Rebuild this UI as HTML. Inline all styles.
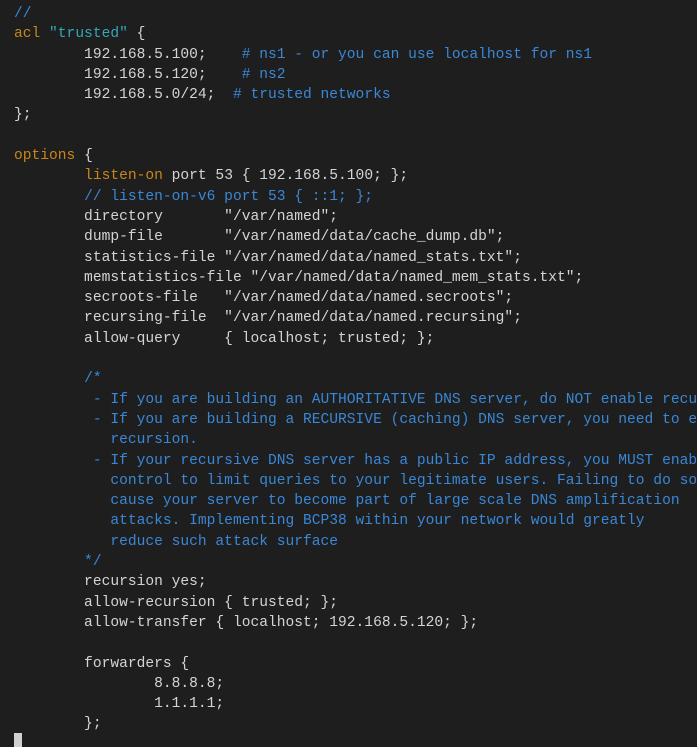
<!DOCTYPE html>
<html><head><style>
html,body{margin:0;padding:0;background:#1e1e1e;width:697px;height:747px;overflow:hidden}
pre{margin:0;padding:4px 0 0 14px;width:683px;height:743px;overflow:hidden;font-family:"Liberation Mono",monospace;font-size:14.6px;line-height:20.3px;color:#d4d4d4;white-space:pre}
.c{color:#3a87d6}.k{color:#c8861a}.s{color:#2fa8b8}
.cur{position:absolute;left:14px;top:733px;width:8px;height:14px;background:#d0d0d0}
</style></head><body><pre><span class="c">//</span>
<span class="k">acl</span> <span class="s">"trusted"</span> {
        192.168.5.100;    <span class="c"># ns1 - or you can use localhost for ns1</span>
        192.168.5.120;    <span class="c"># ns2</span>
        192.168.5.0/24;  <span class="c"># trusted networks</span>
};

<span class="k">options</span> {
        <span class="k">listen-on</span> port 53 { 192.168.5.100; };
        <span class="c">// listen-on-v6 port 53 { ::1; };</span>
        directory       "/var/named";
        dump-file       "/var/named/data/cache_dump.db";
        statistics-file "/var/named/data/named_stats.txt";
        memstatistics-file "/var/named/data/named_mem_stats.txt";
        secroots-file   "/var/named/data/named.secroots";
        recursing-file  "/var/named/data/named.recursing";
        allow-query     { localhost; trusted; };

        <span class="c">/*
         - If you are building an AUTHORITATIVE DNS server, do NOT enable recursion.
         - If you are building a RECURSIVE (caching) DNS server, you need to enable
           recursion.
         - If your recursive DNS server has a public IP address, you MUST enable access
           control to limit queries to your legitimate users. Failing to do so will
           cause your server to become part of large scale DNS amplification
           attacks. Implementing BCP38 within your network would greatly
           reduce such attack surface
        */</span>
        recursion yes;
        allow-recursion { trusted; };
        allow-transfer { localhost; 192.168.5.120; };

        forwarders {
                8.8.8.8;
                1.1.1.1;
        };
</pre><div class="cur"></div></body></html>
